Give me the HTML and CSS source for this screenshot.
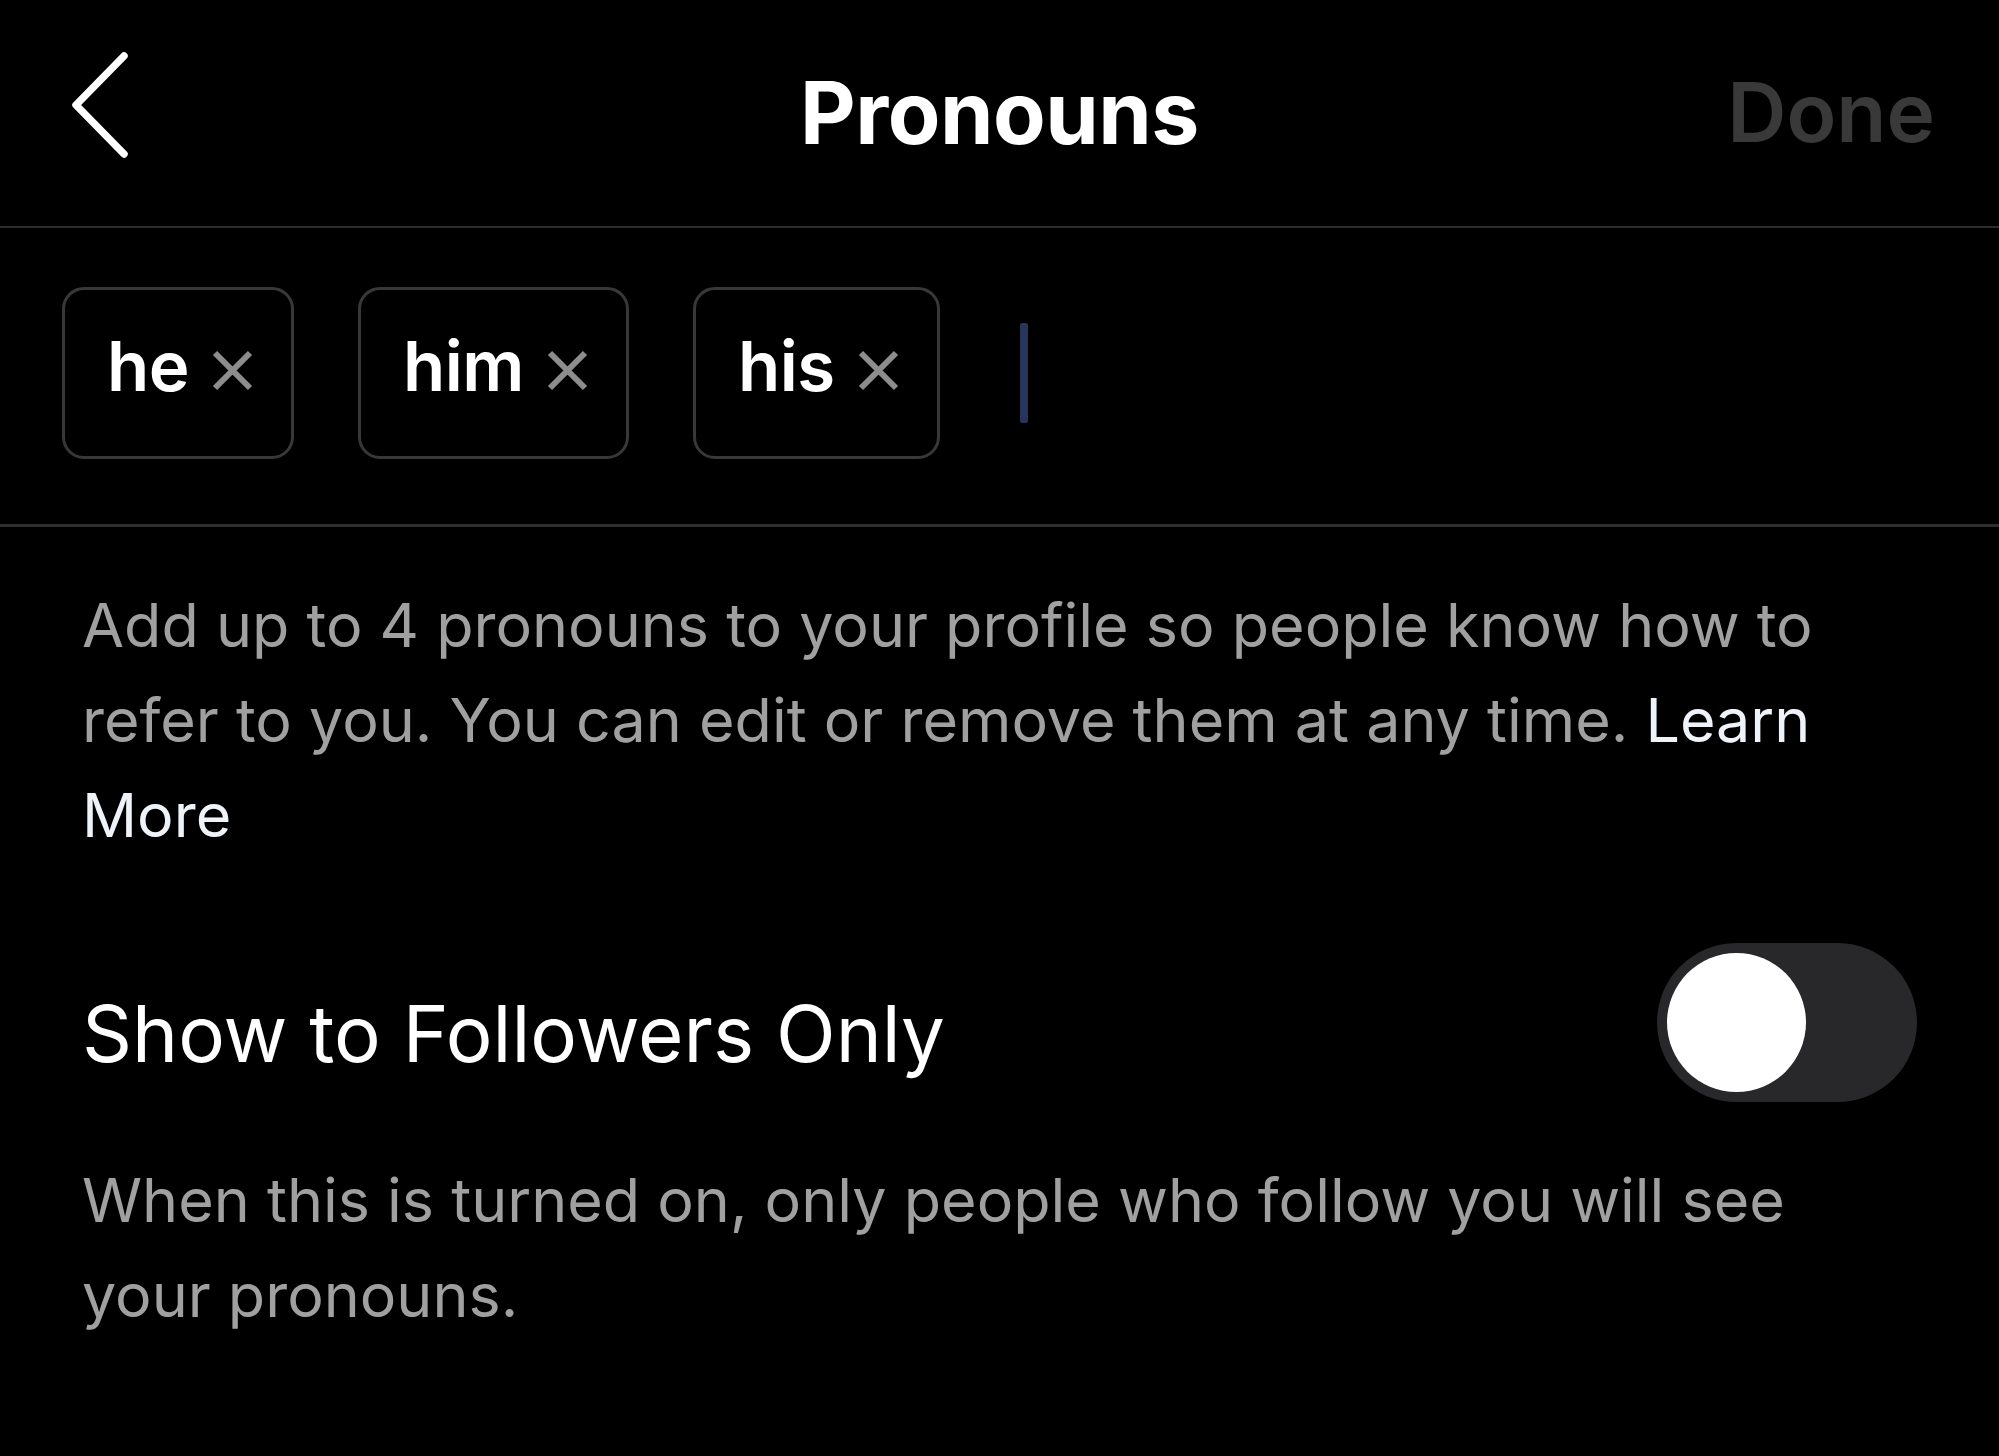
FILE: index.html
```html
<!DOCTYPE html>
<html lang="en">
<head>
<meta charset="utf-8">
<title>Pronouns</title>
<link rel="stylesheet" href="styles.css">
</head>
<body>
  <div class="screen">
    <header class="nav">
      <div class="nav-left">
        <button class="back" aria-label="Back">
          <svg viewBox="0 0 64 108" width="64" height="108">
            <polyline points="52,4 4,53 52,102" fill="none" stroke="#fff" stroke-width="7.5" stroke-linecap="round" stroke-linejoin="round"/>
          </svg>
        </button>
      </div>
      <h1 class="nav-title">Pronouns</h1>
      <div class="nav-right">
        <span class="done">Done</span>
      </div>
    </header>

    <section class="chips">
      <span class="chip">he
        <svg class="chip-x" viewBox="0 0 43 41" width="43" height="41">
          <path d="M4 3 L39 38 M39 3 L4 38" stroke="#8d8d8d" stroke-width="6" stroke-linecap="butt"/>
        </svg>
      </span>
      <span class="chip">him
        <svg class="chip-x" viewBox="0 0 43 41" width="43" height="41">
          <path d="M4 3 L39 38 M39 3 L4 38" stroke="#8d8d8d" stroke-width="6" stroke-linecap="butt"/>
        </svg>
      </span>
      <span class="chip">his
        <svg class="chip-x" viewBox="0 0 43 41" width="43" height="41">
          <path d="M4 3 L39 38 M39 3 L4 38" stroke="#8d8d8d" stroke-width="6" stroke-linecap="butt"/>
        </svg>
      </span>
      <span class="caret"></span>
    </section>

    <p class="note">Add up to 4 pronouns to your profile so people know how to refer to you. You can edit or remove them at any time. <a class="link"><span>Learn</span> <span>More</span></a></p>

    <div class="setting">
      <span class="setting-label">Show to Followers Only</span>
      <span class="switch"><span class="knob"></span></span>
    </div>

    <p class="note note-second">When this is turned on, only people who follow you will see your pronouns.</p>
  </div>
</body>
</html>
```

FILE: styles.css
```css
html, body {
  margin: 0;
  padding: 0;
  background: #000;
}

body {
  font-family: Inter, "Noto Sans", "Liberation Sans", sans-serif;
  color: #fff;
  width: 1999px;
  height: 1456px;
  overflow: hidden;
}

.screen {
  display: flex;
  flex-direction: column;
}

/* top navigation bar */
.nav {
  display: grid;
  grid-template-columns: 1fr auto 1fr;
  align-items: center;
  height: 226px;
  border-bottom: 2px solid #2c2c2c;
}

.nav-left {
  padding-left: 72px;
  display: flex;
  align-items: center;
}

.back {
  background: none;
  border: 0;
  padding: 0;
  margin-top: -14px;
  display: flex;
}

.nav-title {
  margin: 0;
  font-size: 86px;
  font-weight: 700;
  letter-spacing: -0.5px;
  line-height: 1;
}

.nav-right {
  justify-self: end;
  padding-right: 64px;
}

.done {
  font-size: 82px;
  font-weight: 600;
  color: #393939;
  line-height: 1;
}

/* entered pronoun tokens */
.chips {
  display: flex;
  align-items: center;
  gap: 64px;
  height: 299px;
  box-sizing: border-box;
  padding: 0 0 6px 62px;
  border-bottom: 3px solid #2e2e2e;
}

.chip {
  display: inline-flex;
  align-items: center;
  gap: 22px;
  height: 172px;
  box-sizing: border-box;
  padding: 0 37px 14px 42px;
  border: 3px solid #383838;
  border-radius: 22px;
  font-size: 69px;
  font-weight: 600;
  letter-spacing: -0.5px;
}

.chip-x {
  margin-top: 8px;
  flex: none;
}

.caret {
  width: 8px;
  height: 100px;
  margin-left: 16px;
  background: #27355c;
  border-radius: 2px;
}

/* explanatory copy */
.note {
  margin: 51px 0 0;
  padding: 0 150px 0 82px;
  font-size: 61px;
  line-height: 95px;
  color: #a0a0a0;
}

.link {
  color: #eef3fa;
}

.note-second {
  margin-top: 51px;
}

/* followers-only switch row */
.setting {
  display: flex;
  align-items: center;
  justify-content: space-between;
  margin-top: 80px;
  height: 159px;
  padding: 0 82px 0 82px;
}

.setting-label {
  font-size: 78px;
  padding-top: 22px;
  color: #fff;
}

.switch {
  display: flex;
  align-items: center;
  width: 260px;
  height: 159px;
  box-sizing: border-box;
  padding: 0 10px;
  border-radius: 80px;
  background: #28282b;
}

.knob {
  width: 139px;
  height: 139px;
  border-radius: 50%;
  background: #fff;
}
```
